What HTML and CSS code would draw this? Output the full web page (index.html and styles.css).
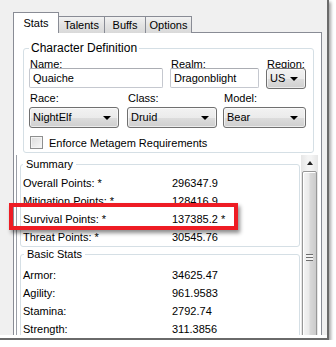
FILE: index.html
```html
<!doctype html>
<html>
    <head>
        <title>Stats</title>
        <link rel="stylesheet" href="styles.css">
    </head>
    <body>
        <div class="frame">
            <div class="shot">
                <div class="tabs">
                    <div class="tab active">Stats</div>
                    <div class="tab">Talents</div>
                    <div class="tab">Buffs</div>
                    <div class="tab">Options</div>
                </div>

                <div class="panel">
                    <fieldset class="group chardef">
                        <legend>Character Definition</legend>
                        <div class="row">
                            <div class="field w-name"><label>Name:</label><div class="textbox">Quaiche</div></div>
                            <div class="field w-realm"><label>Realm:</label><div class="textbox">Dragonblight</div></div>
                            <div class="field w-region"><label>Region:</label><div class="combo">US<span class="arrow"></span></div></div>
                        </div>
                        <div class="row row2">
                            <div class="field w-race"><label>Race:</label><div class="combo">NightElf<span class="arrow"></span></div></div>
                            <div class="field w-class"><label>Class:</label><div class="combo">Druid<span class="arrow"></span></div></div>
                            <div class="field w-model"><label>Model:</label><div class="combo">Bear<span class="arrow"></span></div></div>
                        </div>
                        <div class="check"><span class="box"></span>Enforce Metagem Requirements</div>
                    </fieldset>

                    <div class="scroller">
                        <div class="scroll-content">
                            <fieldset class="group stats summary">
                                <legend>Summary</legend>
                                <div class="stat"><span class="name">Overall Points: *</span><span>296347.9</span></div>
                                <div class="stat"><span class="name">Mitigation Points: *</span><span>128416.9</span></div>
                                <div class="stat"><span class="name">Survival Points: *</span><span>137385.2 *</span></div>
                                <div class="stat"><span class="name">Threat Points: *</span><span>30545.76</span></div>
                            </fieldset>
                            <fieldset class="group stats basic">
                                <legend>Basic Stats</legend>
                                <div class="stat"><span class="name">Armor:</span><span>34625.47</span></div>
                                <div class="stat"><span class="name">Agility:</span><span>961.9583</span></div>
                                <div class="stat"><span class="name">Stamina:</span><span>2792.74</span></div>
                                <div class="stat"><span class="name">Strength:</span><span>311.3856</span></div>
                            </fieldset>
                        </div>
                        <div class="scrollbar">
                            <div class="sb-up"><span class="up-arrow"></span></div>
                            <div class="sb-thumb"><span class="grip"></span></div>
                        </div>
                    </div>
                </div>
            </div>

            <!-- red highlight drawn over the screenshot -->
            <div class="highlight"></div>
        </div>
    </body>
</html>
```

FILE: styles.css
```css
body{
    margin: 0;
    background: #fff;
    font-family: "Liberation Sans", Arial, sans-serif;
    font-size: 11px;
    color: #000;
}
.frame{
    position: relative;
    width: 327px;
    height: 338px;
    background: #fff;
    border-right: 2px solid #6a6a6a;
    border-bottom: 2px solid #6a6a6a;
    box-shadow: 2px 2px 3px rgba(0,0,0,.35);
}
.shot{
    height: 335px;
    overflow: hidden;
    background: #f0f0f0;
    padding: 12px 0 0 13px;
    box-sizing: border-box;
}

/* tabs */
.tabs{
    display: flex;
    align-items: flex-end;
    height: 21px;
}
.tab{
    box-sizing: border-box;
    height: 17px;
    line-height: 16px;
    text-align: center;
    border: 1px solid #898c95;
    border-bottom: none;
    background: linear-gradient(#f2f2f2, #e3e3e3 50%, #d9d9d9);
    margin-left: -1px;
}
.tab:nth-child(2){ width: 47px; }
.tab:nth-child(3){ width: 42px; }
.tab:nth-child(4){ width: 47px; }
.tab.active{
    position: relative;
    z-index: 1;
    width: 46px;
    height: 21px;
    line-height: 20px;
    margin-left: 0;
    background: #fff;
}
.panel{
    width: 309px;
    height: 320px;
    margin-top: -1px;
    box-sizing: border-box;
    border: 1px solid #898c95;
    background: #fff;
}

/* group boxes */
.group{
    margin: 0;
    border: 1px solid #d5dfe5;
    border-radius: 3px;
    box-sizing: border-box;
    min-width: 0;
}
.group legend{
    padding: 0 2px;
    line-height: 13px;
}
.chardef{
    width: 291px;
    margin: 8px 0 0 9px;
    padding: 3px 5px 3px 5px;
}
.chardef legend{
    font-size: 12px;
    line-height: 14px;
}
.row{
    display: flex;
    gap: 7px;
}
.row2{
    margin-top: 3px;
    gap: 8px;
}
.row2 .w-model{ margin-left: -2px; }
.field label{
    display: block;
    line-height: 12px;
    margin-bottom: -2px;
    padding-left: 1px;
}
.row2 .field label{ margin-bottom: 3px; }
.w-name{ width: 134px; }
.w-realm{ width: 89px; }
.w-region{ width: 40px; }
.w-race{ width: 90px; }
.w-class{ width: 90px; }
.w-model{ width: 83px; }

.textbox{
    height: 20px;
    line-height: 18px;
    box-sizing: border-box;
    border: 1px solid #c5c8cf;
    border-top-color: #abadb3;
    border-radius: 2px;
    padding-left: 3px;
    background: #fff;
}
.combo{
    position: relative;
    height: 21px;
    line-height: 19px;
    box-sizing: border-box;
    border: 1px solid #707070;
    border-radius: 3px;
    padding-left: 3px;
    background: linear-gradient(#f2f2f2, #ebebeb 50%, #dddddd 51%, #cfcfcf);
    box-shadow: inset 0 0 0 1px rgba(255,255,255,.6);
}
.combo .arrow{
    position: absolute;
    right: 7px;
    top: 8px;
    border-left: 4px solid transparent;
    border-right: 4px solid transparent;
    border-top: 4px solid #000;
}
.check{
    display: flex;
    align-items: center;
    gap: 6px;
    margin-top: 8px;
    height: 13px;
    padding-left: 1px;
}
.check .box{
    width: 13px;
    height: 13px;
    box-sizing: border-box;
    border: 1px solid #8e8f8f;
    background: linear-gradient(135deg, #dcdcdc, #f8f8f8);
    box-shadow: inset 0 0 0 1px #f4f4f4;
}

/* scrolling stats area */
.scroller{
    display: flex;
    width: 302px;
    height: 190px;
    margin: 2px 0 0 2px;
    border-left: 1px solid #9a9ea6;
}
.scroll-content{
    width: 284px;
}
.stats{
    width: 280px;
    margin-left: 3px;
    padding: 3px 0 0 2px;
}
.stats legend{
    padding: 0 3px;
}
.summary{ margin-top: 3px; }
.basic{
    margin-top: 1px;
    padding-top: 5px;
}
.basic legend{ margin-left: 1px; }
.stat{
    display: flex;
    height: 18px;
    line-height: 18px;
}
.stat .name{
    width: 149px;
}

.scrollbar{
    width: 17px;
    background: linear-gradient(90deg, #e6e6e6, #f4f4f4 40%, #f4f4f4 60%, #e6e6e6);
    display: flex;
    flex-direction: column;
}
.sb-up{
    height: 17px;
    display: flex;
    align-items: center;
    justify-content: center;
}
.up-arrow{
    border-left: 3px solid transparent;
    border-right: 3px solid transparent;
    border-bottom: 4px solid #222;
}
.sb-thumb{
    height: 188px;
    margin: 0 1px;
    box-sizing: border-box;
    border: 1px solid #979797;
    border-radius: 2px;
    background: linear-gradient(90deg, #f4f4f4, #eaeaea 45%, #d8d8d8 55%, #cbcbcb);
    box-shadow: inset 1px 1px 0 #fff;
    display: flex;
    align-items: center;
    justify-content: center;
}
.grip{
    width: 7px;
    height: 7px;
    background: repeating-linear-gradient(#6e6e6e 0 1px, #f2f2f2 1px 3px);
}

.highlight{
    position: absolute;
    left: 9px;
    top: 203px;
    width: 229px;
    height: 27px;
    box-sizing: border-box;
    border: 4px solid #ee1c24;
    box-shadow: 2px 3px 4px rgba(0,0,0,.45);
}
```
